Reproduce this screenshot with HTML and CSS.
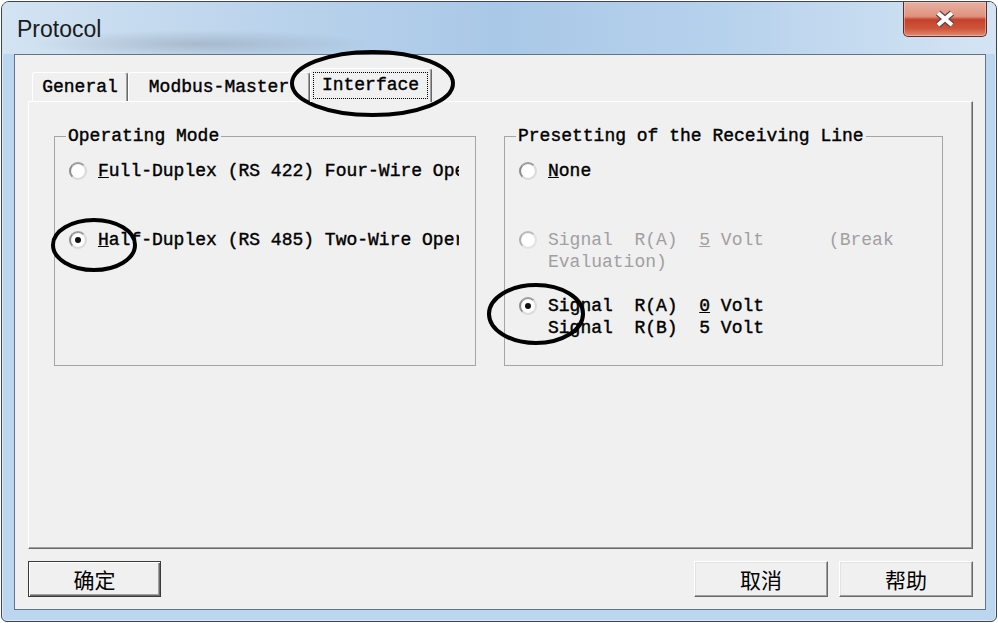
FILE: index.html
```html
<!DOCTYPE html>
<html lang="en">
<head>
    <meta charset="UTF-8">
    <title>Protocol</title>
    <link rel="stylesheet" href="styles.css">
</head>
<body>
    <div class="window">
        <!-- title bar -->
        <div class="titlebar">
            <span class="title">Protocol</span>
            <button class="close">
                <svg width="22" height="18" viewBox="0 0 22 18">
                    <path d="M4 3 L18 15 M18 3 L4 15" stroke="#5a4a48" stroke-width="6.5" fill="none"/>
                    <path d="M4 3 L18 15 M18 3 L4 15" stroke="#fff" stroke-width="4" fill="none"/>
                </svg>
            </button>
        </div>

        <div class="client">
            <!-- tabs -->
            <div class="tabs">
                <div class="tab tab-general">General</div>
                <div class="tab tab-modbus">Modbus-Master</div>
                <div class="tab tab-interface"><span class="focus">Interface</span></div>
            </div>

            <div class="pane">
                <fieldset class="group group-mode">
                    <legend>Operating Mode</legend>
                    <div class="opt">
                        <span class="radio"></span>
                        <span class="label clip"><u>F</u>ull-Duplex (RS 422) Four-Wire Operation</span>
                    </div>
                    <div class="opt second">
                        <span class="radio checked"></span>
                        <span class="label clip"><u>H</u>alf-Duplex (RS 485) Two-Wire Operation</span>
                    </div>
                </fieldset>

                <fieldset class="group group-line">
                    <legend>Presetting of the Receiving Line</legend>
                    <div class="opt">
                        <span class="radio"></span>
                        <span class="label"><u>N</u>one</span>
                    </div>
                    <div class="opt second disabled">
                        <span class="radio"></span>
                        <span class="label">Signal  R(A)  <u>5</u> Volt      (Break
Evaluation)</span>
                    </div>
                    <div class="opt third">
                        <span class="radio checked"></span>
                        <span class="label">Signal  R(A)  <u>0</u> Volt
Signal  R(B)  5 Volt</span>
                    </div>
                </fieldset>
            </div>

            <!-- dialog buttons -->
            <div class="buttons">
                <button class="btn btn-default">确定</button>
                <button class="btn">取消</button>
                <button class="btn">帮助</button>
            </div>
        </div>
    </div>

    <!-- hand drawn marks on the screenshot -->
    <svg class="marks" width="998" height="623" viewBox="0 0 998 623">
        <g fill="none" stroke="#000" stroke-width="4">
            <ellipse cx="372.5" cy="83.5" rx="80.5" ry="31.5"/>
            <ellipse cx="94" cy="245" rx="41" ry="25"/>
            <ellipse cx="536" cy="314" rx="47" ry="29"/>
        </g>
    </svg>
</body>
</html>
```

FILE: styles.css
```css
/* page */
body {
    margin: 0;
    background: #fff;
    font-family: "Liberation Mono", monospace;
    color: #000;
}

/* window frame */
.window {
    margin: 1px 0 0 1px;
    width: 996px;
    height: 621px;
    box-sizing: border-box;
    border: 1px solid #3d4650;
    border-radius: 8px 8px 6px 6px;
    background: #bcd6ef;
    box-shadow: inset 0 0 0 1px rgba(255, 255, 255, 0.5);
    display: flex;
    flex-direction: column;
    overflow: hidden;
}
.titlebar {
    height: 52px;
    flex: none;
    display: flex;
    justify-content: space-between;
    align-items: flex-start;
    background:
        radial-gradient(ellipse 170px 14px at 200px 42px, rgba(120, 132, 145, 0.35), transparent),
        linear-gradient(90deg, #d3e3f2 0%, #bcd4ec 25%, #a9c8e7 50%, #b6d1ec 72%, #d4e4f4 100%);
}
.title {
    font: 23px/26px "Liberation Sans", Arial, sans-serif;
    color: #1b1b1b;
    margin: 14px 0 0 15px;
}
.close {
    width: 84px;
    height: 35px;
    margin-right: 9px;
    padding: 0;
    border: 1px solid #5d2d25;
    border-top: none;
    border-radius: 0 0 5px 5px;
    background: linear-gradient(#e7b0a3 0%, #df937f 42%, #c6412b 52%, #cd553b 78%, #e28a6e 100%);
    box-shadow: inset 0 0 0 1px rgba(255, 215, 205, 0.45);
    display: flex;
    align-items: center;
    justify-content: center;
}

/* client area */
.client {
    flex: 1;
    margin: 0 10px 11px 12px;
    border: 1px solid #62748a;
    background: #f0f0f0;
    padding: 13px 12px 12px 13px;
    display: flex;
    flex-direction: column;
}

/* tabs */
.tabs {
    display: flex;
    align-items: flex-end;
    height: 33px;
    margin-left: 4px;
}
.tab {
    height: 29px;
    box-sizing: border-box;
    border: 1px solid;
    border-color: #fff #696969 transparent #fff;
    border-bottom: none;
    border-radius: 3px 3px 0 0;
    box-shadow: inset -1px 0 #a0a0a0;
    background: #f0f0f0;
    text-align: center;
    font-size: 18px;
    line-height: 28px;
    -webkit-text-stroke: 0.4px currentColor;
}
.tab-general { width: 96px; }
.tab-modbus { width: 182px; }
.tab-interface {
    width: 122px;
    height: 34px;
    margin-bottom: -1px;
    padding: 3px 3px 0 2px;
    position: relative;
    z-index: 1;
}
.focus {
    display: block;
    height: 27px;
    box-sizing: border-box;
    border: 1px dotted #000;
    line-height: 25px;
}

/* tab page */
.pane {
    height: 448px;
    flex: none;
    box-sizing: border-box;
    border: 1px solid;
    border-color: #fff #696969 #696969 #fff;
    box-shadow: inset -1px -1px #a0a0a0;
    padding: 24px 0 0 25px;
    display: flex;
    align-items: flex-start;
    gap: 28px;
}
.group {
    margin: 0;
    padding: 14px 0 0 0;
    height: 240px;
    box-sizing: border-box;
    border: 1px solid #a5a5a5;
    min-width: 0;
}
.group-mode { width: 422px; }
.group-line { width: 439px; }
.group legend {
    font-size: 18px;
    line-height: 20px;
    padding: 0 2px;
    margin-left: 11px;
    -webkit-text-stroke: 0.4px currentColor;
}

/* radio options */
.opt {
    display: flex;
    gap: 11px;
    padding-left: 14px;
    font-size: 18px;
    line-height: 22px;
    -webkit-text-stroke: 0.4px currentColor;
}
.opt.second { margin-top: 47px; }
.opt.third { margin-top: 22px; }
.label { white-space: pre; }
.clip {
    width: 361px;
    overflow: hidden;
}
.disabled {
    color: #a0a0a0;
    -webkit-text-stroke: 0;
}

.radio {
    flex: none;
    width: 18px;
    height: 18px;
    margin-top: 2px;
    box-sizing: border-box;
    border-radius: 50%;
    border: 2px solid #dadada;
    border-left-color: #8c8c8c;
    border-top-color: #9c9c9c;
    background: radial-gradient(circle, #fff 55%, #ececec 100%);
    display: grid;
    place-items: center;
}
.radio.checked::after {
    content: "";
    width: 6px;
    height: 6px;
    border-radius: 50%;
    background: #111;
}
.disabled .radio {
    border-color: #e2e2e2;
    border-left-color: #b0b0b0;
    border-top-color: #bababa;
}

/* buttons */
.buttons {
    display: flex;
    gap: 11px;
    margin-top: 12px;
    height: 36px;
}
.btn {
    width: 134px;
    height: 36px;
    box-sizing: border-box;
    padding: 0;
    font: 21px/1 "Noto Sans CJK SC", sans-serif;
    color: #000;
    background: #f0f0f0;
    border: 1px solid;
    border-color: #fff #696969 #696969 #fff;
    box-shadow: inset -1px -1px #a0a0a0, inset 1px 1px #e3e3e3;
}
.btn-default {
    width: 133px;
    margin-right: auto;
    border-color: #3a3a3a;
    box-shadow: inset 1px 1px #fff, inset -1px -1px #696969, inset -2px -2px #a0a0a0;
}

/* annotation overlay */
.marks {
    position: absolute;
    left: 0;
    top: 0;
    pointer-events: none;
}
```
